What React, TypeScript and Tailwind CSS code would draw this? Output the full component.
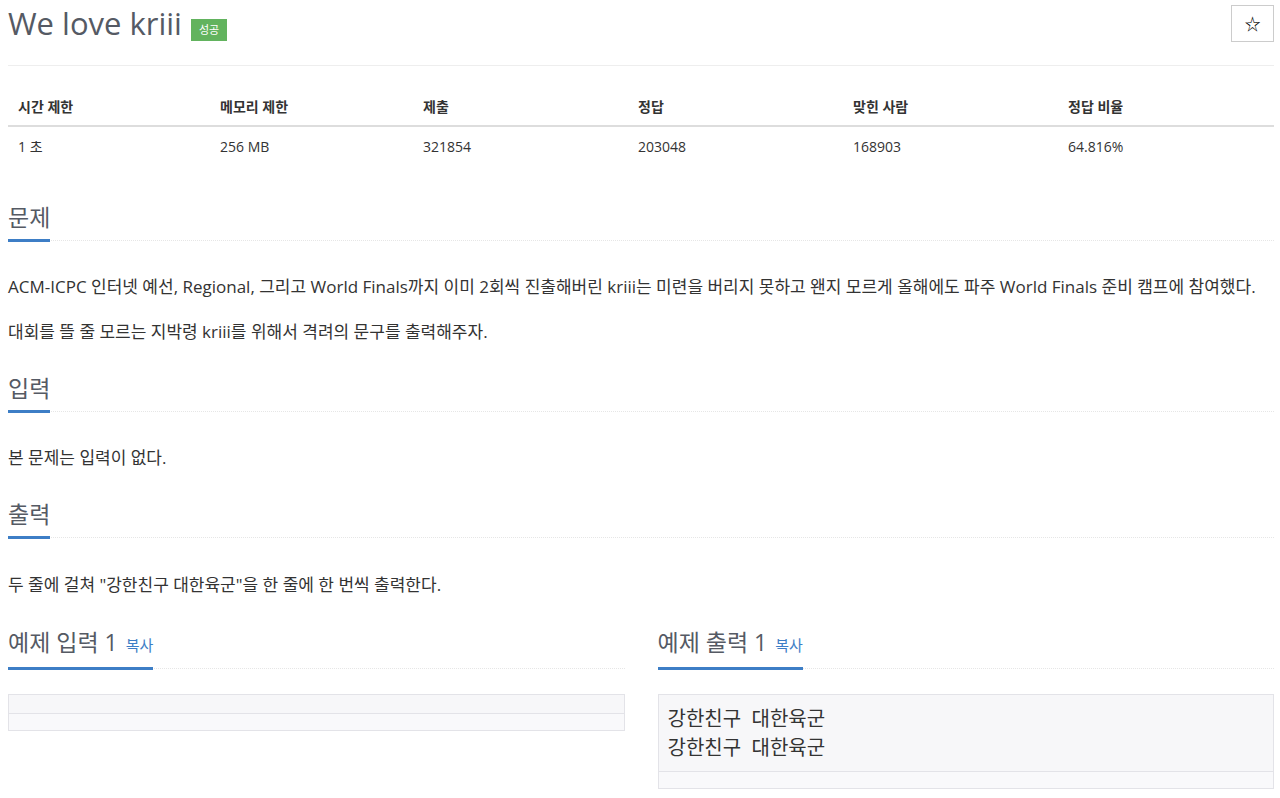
import React from 'react'

const font = "font-['Open_Sans','Noto_Sans_CJK_KR',sans-serif]"

const stats = [
  ['시간 제한', '1 초'],
  ['메모리 제한', '256 MB'],
  ['제출', '321854'],
  ['정답', '203048'],
  ['맞힌 사람', '168903'],
  ['정답 비율', '64.816%'],
]

const SectionTitle: React.FC<{ children: React.ReactNode }> = ({ children }) => (
  <div className="border-b border-dotted border-[#e6e6e6]">
    <h2 className="-mb-[2px] inline-block border-b-[3px] border-[#3d7ec6] pb-[10px] text-[23px] leading-[24px] text-[#555a64]">
      {children}
    </h2>
  </div>
)

const SampleBox: React.FC<{ lines: string[] }> = ({ lines }) => (
  <div className="border border-[#e3e3e8] bg-[#f7f7f9]">
    <pre className="px-[9px] pb-[9.5px] pt-[8.5px] text-[20px] leading-[29px] text-[#333] font-['Open_Sans','Noto_Sans_CJK_KR',sans-serif]">
      {lines.join('\n')}
    </pre>
    <div className="h-[17px] border-t border-[#e3e3e8] bg-[#f9f9fb]" />
  </div>
)

const App: React.FC = () => {
  return (
    <div className={`${font} min-h-[798px] bg-white pl-2 pr-[6px] text-[#333]`}>
      <div className="flex items-start justify-between">
        <div className="mt-[1px] flex items-end gap-[9px]">
          <h1 className="text-[31px] leading-[44px] text-[#555a64]">We love kriii</h1>
          <span className="mb-[4px] flex h-[22px] items-center bg-[#62b35e] px-[8px] text-[11px] text-white">
            성공
          </span>
        </div>
        <button className="mt-[5px] flex h-[37px] w-[43px] items-center justify-center border border-[#ccc] bg-white text-[16px] text-black">
          ☆
        </button>
      </div>

      <div className="mt-[20px] border-t border-[#eee]" />

      <div className="mt-[22px] text-[14px]">
        <div className="grid grid-cols-[202px_203px_215px_215px_215px_1fr] border-b-2 border-[#ddd]">
          {stats.map(([h]) => (
            <div key={h} className="flex h-[37px] items-center px-[10px] font-bold text-[#333]">
              {h}
            </div>
          ))}
        </div>
        <div className="grid grid-cols-[202px_203px_215px_215px_215px_1fr]">
          {stats.map(([h, v]) => (
            <div key={h} className="flex h-[38px] items-center px-[10px] text-[#333]">
              {v}
            </div>
          ))}
        </div>
      </div>

      <div className="mt-[40px]">
        <SectionTitle>문제</SectionTitle>
        <div className="mt-[31px] text-[17px] leading-[30px]">
          <p>
            ACM-ICPC 인터넷 예선, Regional, 그리고 World Finals까지 이미 2회씩 진출해버린 kriii는 미련을 버리지 못하고 왠지 모르게 올해에도 파주 World Finals 준비 캠프에 참여했다.
          </p>
          <p className="mt-[15px]">대회를 뜰 줄 모르는 지박령 kriii를 위해서 격려의 문구를 출력해주자.</p>
        </div>
      </div>

      <div className="mt-[29px]">
        <SectionTitle>입력</SectionTitle>
        <p className="mt-[31px] text-[17px] leading-[30px]">본 문제는 입력이 없다.</p>
      </div>

      <div className="mt-[29px]">
        <SectionTitle>출력</SectionTitle>
        <p className="mt-[32px] text-[17px] leading-[30px]">두 줄에 걸쳐 "강한친구 대한육군"을 한 줄에 한 번씩 출력한다.</p>
      </div>

      <div className="mt-[30px] grid grid-cols-2 gap-[33px]">
        <div>
          <SectionTitle>
            예제 입력 1 <a className="ml-[2px] text-[15px] text-[#3d7ec6]">복사</a>
          </SectionTitle>
          <div className="mt-[25px]">
            <SampleBox lines={[]} />
          </div>
        </div>
        <div>
          <SectionTitle>
            예제 출력 1 <a className="ml-[2px] text-[15px] text-[#3d7ec6]">복사</a>
          </SectionTitle>
          <div className="mt-[25px]">
            <SampleBox lines={['강한친구  대한육군', '강한친구  대한육군']} />
          </div>
        </div>
      </div>
    </div>
  )
}

export default App
